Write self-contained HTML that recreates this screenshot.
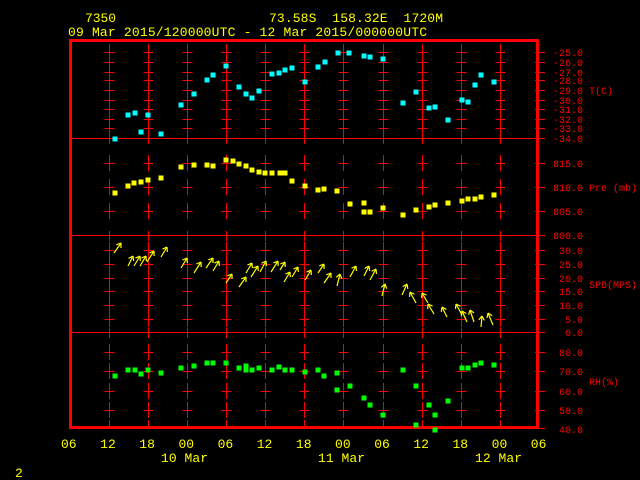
<!DOCTYPE html>
<html><head><meta charset="utf-8"><style>
html,body{margin:0;padding:0;background:#000;}
svg{display:block;}
text{font-family:"Liberation Mono","DejaVu Sans Mono",monospace;}
</style></head><body>
<svg id="s" width="640" height="480" viewBox="0 0 640 480" xmlns="http://www.w3.org/2000/svg">
<rect width="640" height="480" fill="#000"/>
<g id="grid" stroke="#f00" stroke-width="1" shape-rendering="crispEdges"></g>
<g id="data"></g>
<g fill="#ff0" font-size="13">
<text x="85" y="22" textLength="31">7350</text>
<text x="269" y="22" textLength="174" xml:space="preserve">73.58S  158.32E  1720M</text>
<text x="68" y="36" textLength="359" xml:space="preserve">09 Mar 2015/120000UTC - 12 Mar 2015/000000UTC</text>
<text x="15" y="477">2</text>
<text x="161" y="462" textLength="47">10 Mar</text>
<text x="318" y="462" textLength="47">11 Mar</text>
<text x="475" y="462" textLength="47">12 Mar</text>
</g>
<g id="tl" fill="#ff0" font-size="13"></g>
<g fill="#f00" font-size="10">
<text x="553" y="56">-25.0</text><text x="553" y="66">-26.0</text><text x="553" y="76">-27.0</text>
<text x="553" y="84">-28.0</text><text x="553" y="94">-29.0</text><text x="553" y="104">-30.0</text>
<text x="553" y="113">-31.0</text><text x="553" y="123">-32.0</text><text x="553" y="132">-33.0</text>
<text x="553" y="142">-34.0</text><text x="589" y="94">T(C)</text>
<text x="553" y="167">815.0</text><text x="553" y="191">810.0</text><text x="553" y="215">805.0</text>
<text x="553" y="239">800.0</text><text x="589" y="191">Pre (mb)</text>
<text x="559" y="254">30.0</text><text x="559" y="268">25.0</text><text x="559" y="282">20.0</text>
<text x="559" y="295">15.0</text><text x="559" y="309">10.0</text><text x="565" y="323">5.0</text>
<text x="565" y="336">0.0</text><text x="589" y="288">SPD(MPS)</text>
<text x="559" y="356">80.0</text><text x="559" y="375">70.0</text><text x="559" y="395">60.0</text>
<text x="559" y="414">50.0</text><text x="559" y="433">40.0</text><text x="589" y="385">RH(%)</text>
</g>
</svg>
<script>
var NS="http://www.w3.org/2000/svg";
function el(p,t,a){var e=document.createElementNS(NS,t);for(var k in a)e.setAttribute(k,a[k]);p.appendChild(e);return e;}
var g=document.getElementById('grid'),d=document.getElementById('data'),tl=document.getElementById('tl');
function L(x1,y1,x2,y2,c,w){el(g,'line',{x1:x1,y1:y1,x2:x2,y2:y2,stroke:c||'#f00','stroke-width':w||1});}
// frame
el(g,'rect',{x:70.5,y:40.5,width:467,height:387,fill:'none','stroke-width':3});
[138,235,332].forEach(function(y){L(72,y+0.5,537,y+0.5);});
var ticks=[52,62,72,80,90,100,109,119,128,163,187,211,250,264,278,291,305,319,352,371,391,410];
var cols=[];for(var i=0;i<11;i++)cols.push(Math.round(108.5+39.15*i)+0.5);
cols.forEach(function(x){
 ticks.forEach(function(y){L(x,y-8,x,y+8);L(x-5,y+0.5,x+5,y+0.5);});
 [138,235,332].forEach(function(y){L(x,y-4,x,y+6);});
 L(x,420,x,427);
});
ticks.concat([138,235,332,428]).forEach(function(y){L(535,y+0.5,545,y+0.5);});
// time labels
var lab=['06','12','18','00','06','12','18','00','06','12','18','00','06'];
for(var i=0;i<13;i++){var t=el(tl,'text',{x:61+39.15*i,y:448});t.textContent=lab[i];}
function sq(pts,c){pts.forEach(function(p){el(d,'rect',{x:p[0]-2.5,y:p[1]-2.5,width:5,height:5,fill:c});});}
sq([[115,139],[128,115],[135,113],[148,115],[141,132],[161,134],[181,105],[194,94],[207,80],[213,75],[226,66],[239,87],[246,94],[252,98],[259,91],[272,74],[279,73],[285,70],[292,68],[305,82],[318,67],[325,62],[338,53],[349,53],[364,56],[370,57],[383,59],[403,103],[416,92],[429,108],[435,107],[448,120],[462,100],[468,102],[475,85],[481,75],[494,82]],'#00ffff');
sq([[115,193],[128,186],[134,183],[141,182],[148,180],[161,178],[181,167],[194,165],[207,165],[213,166],[226,160],[233,161],[239,164],[246,166],[252,170],[259,172],[265,173],[272,173],[280,173],[285,173],[292,181],[305,186],[318,190],[324,189],[337,191],[350,204],[364,203],[364,212],[370,212],[383,208],[403,215],[416,210],[429,207],[435,205],[448,203],[462,201],[468,199],[475,199],[481,197],[494,195]],'#ffff00');
sq([[115,376],[128,370],[135,370],[141,374],[148,370],[161,373],[181,368],[194,366],[207,363],[213,363],[226,363],[239,368],[246,366],[246,370],[252,370],[259,368],[272,370],[279,367],[285,370],[292,370],[305,372],[318,370],[324,376],[337,373],[337,390],[350,386],[364,398],[370,405],[383,415],[403,370],[416,386],[416,425],[429,405],[435,415],[435,430],[448,401],[462,368],[468,368],[475,365],[481,363],[494,365]],'#00ff00');
var ar=[[121,243,114,253],[133,256,128,266],[140,256,134,266],[146,256,140,266],[154,251,147,262],[167,247,161,257],[187,258,181,268],[201,262,194,273],[213,258,206,268],[219,261,213,271],[232,274,226,283],[246,277,239,287],[252,263,246,273],[258,266,251,277],[266,261,260,272],[278,261,271,272],[285,262,280,270],[290,272,284,282],[298,267,292,277],[311,270,305,280],[324,264,318,273],[331,273,324,283],[340,274,337,286],[356,266,350,277],[369,266,364,276],[376,269,370,280],[385,284,382,296],[407,284,402,295],[410,292,416,303],[422,293,428,303],[428,304,434,314],[442,307,447,317],[456,304,462,315],[462,311,467,322],[470,310,474,322],[482,316,481,327],[488,313,493,325]];
ar.forEach(function(a){
 var tx=a[0],ty=a[1],bx=a[2],by=a[3];
 el(d,'line',{x1:bx,y1:by,x2:tx,y2:ty,stroke:'#ff0','stroke-width':1.2});
 var ang=Math.atan2(by-ty,bx-tx);
 [0.6,-0.6].forEach(function(o){el(d,'line',{x1:tx,y1:ty,x2:tx+5*Math.cos(ang+o),y2:ty+5*Math.sin(ang+o),stroke:'#ff0','stroke-width':1.2});});
});
</script>
</body></html>
